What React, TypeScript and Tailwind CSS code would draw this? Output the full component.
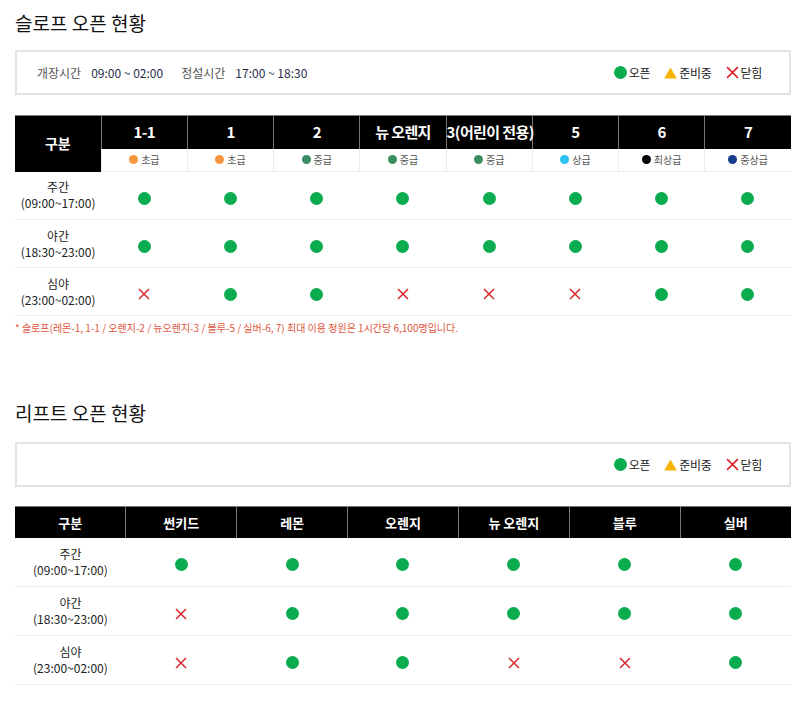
const font = { fontFamily: '"Noto Sans CJK KR", "Noto Sans", sans-serif' };

type S = 'o' | 'x';

const slopes = [
  { name: '1-1', level: '초급', color: 'bg-[#f7963c]' },
  { name: '1', level: '초급', color: 'bg-[#f7963c]' },
  { name: '2', level: '중급', color: 'bg-[#3b8d62]' },
  { name: '뉴 오렌지', level: '중급', color: 'bg-[#3b8d62]' },
  { name: '3(어린이 전용)', level: '중급', color: 'bg-[#3b8d62]' },
  { name: '5', level: '상급', color: 'bg-[#2cc3f2]' },
  { name: '6', level: '최상급', color: 'bg-black' },
  { name: '7', level: '중상급', color: 'bg-[#153d8a]' },
];

const slopeRows: { label: string; time: string; s: S[] }[] = [
  { label: '주간', time: '(09:00~17:00)', s: ['o', 'o', 'o', 'o', 'o', 'o', 'o', 'o'] },
  { label: '야간', time: '(18:30~23:00)', s: ['o', 'o', 'o', 'o', 'o', 'o', 'o', 'o'] },
  { label: '심야', time: '(23:00~02:00)', s: ['x', 'o', 'o', 'x', 'x', 'x', 'o', 'o'] },
];

const lifts = ['썬키드', '레몬', '오렌지', '뉴 오렌지', '블루', '실버'];

const liftRows: { label: string; time: string; s: S[] }[] = [
  { label: '주간', time: '(09:00~17:00)', s: ['o', 'o', 'o', 'o', 'o', 'o'] },
  { label: '야간', time: '(18:30~23:00)', s: ['x', 'o', 'o', 'o', 'o', 'o'] },
  { label: '심야', time: '(23:00~02:00)', s: ['x', 'o', 'o', 'x', 'x', 'o'] },
];

function Cross({ size = 12 }: { size?: number }) {
  return (
    <svg width={size} height={size} viewBox="0 0 12 12" className="inline-block">
      <path d="M1 1L11 11M11 1L1 11" stroke="#d8262d" strokeWidth="1.5" fill="none" />
    </svg>
  );
}

function Mark({ s }: { s: S }) {
  return s === 'o' ? (
    <span className="inline-block h-[13px] w-[13px] rounded-full bg-[#0bab4f] align-middle" />
  ) : (
    <span className="inline-flex align-middle">
      <Cross />
    </span>
  );
}

function Legend() {
  return (
    <div className="flex items-center gap-[14px] text-[12px] tracking-[-0.3px] text-[#222]">
      <div className="flex items-center gap-[2px]">
        <span className="inline-block h-[13px] w-[13px] rounded-full bg-[#0bab4f]" />
        <span>오픈</span>
      </div>
      <div className="flex items-center gap-[2px]">
        <svg width="13" height="12" viewBox="0 0 13 12">
          <path d="M6.5 0.5L12.8 11.5H0.2Z" fill="#f7b500" />
        </svg>
        <span>준비중</span>
      </div>
      <div className="flex items-center gap-[2px]">
        <Cross size={13} />
        <span>닫힘</span>
      </div>
    </div>
  );
}

function TimeCell({ label, time }: { label: string; time: string }) {
  return (
    <td className="h-[48px] border-b border-[#ececec] text-center text-[12px] leading-[16px] text-[#222]">
      <div>{label}</div>
      <div>{time}</div>
    </td>
  );
}

export default function App() {
  return (
    <div className="min-h-[720px] bg-white pl-[15px] pr-[9px] pt-[9px] text-[#222]" style={font}>
      {/* 슬로프 */}
      <h2 className="text-[19px] font-normal leading-[28px] text-[#111]">슬로프 오픈 현황</h2>
      <div className="mt-[13px] flex h-[45px] items-center justify-between border-2 border-[#e3e3e3] pl-[20px] pr-[27px]">
        <div className="flex items-center text-[12px]">
          <span className="text-[#555]">개장시간</span>
          <span className="ml-[10px] text-[#1f2d4a]">09:00 ~ 02:00</span>
          <span className="ml-[18px] text-[#555]">정설시간</span>
          <span className="ml-[10px] text-[#1f2d4a]">17:00 ~ 18:30</span>
        </div>
        <Legend />
      </div>

      <table className="mt-[20px] w-full table-fixed border-collapse">
        <thead>
          <tr className="bg-black text-white">
            <th
              rowSpan={2}
              className="h-[56px] border-t border-[#777] text-[14px] font-bold"
            >
              구분
            </th>
            {slopes.map((c) => (
              <th
                key={c.name}
                className="h-[33px] whitespace-nowrap border-l border-t border-[#777] text-[15px] font-bold tracking-[-0.6px]"
              >
                {c.name}
              </th>
            ))}
          </tr>
          <tr>
            {slopes.map((c, i) => (
              <td
                key={i}
                className="h-[23px] border-b border-l border-[#ececec] text-center text-[10px] text-[#555]"
              >
                <span className="inline-flex items-center gap-[3px]">
                  <span className={`inline-block h-[9px] w-[9px] rounded-full ${c.color}`} />
                  {c.level}
                </span>
              </td>
            ))}
          </tr>
        </thead>
        <tbody>
          {slopeRows.map((r) => (
            <tr key={r.label}>
              <TimeCell label={r.label} time={r.time} />
              {r.s.map((s, i) => (
                <td key={i} className="border-b border-[#ececec] text-center">
                  <Mark s={s} />
                </td>
              ))}
            </tr>
          ))}
        </tbody>
      </table>
      <p className="mt-[4px] text-[10px] text-[#e0553c]">
        * 슬로프(레몬-1, 1-1 / 오렌지-2 / 뉴오렌지-3 / 블루-5 / 실버-6, 7) 최대 이용 정원은 1시간당 6,100명입니다.
      </p>

      {/* 리프트 */}
      <h2 className="mt-[64px] text-[19px] font-normal leading-[28px] text-[#111]">리프트 오픈 현황</h2>
      <div className="mt-[15px] flex h-[45px] items-center justify-end border-2 border-[#e3e3e3] pr-[27px]">
        <Legend />
      </div>

      <table className="mt-[19px] w-full table-fixed border-collapse">
        <thead>
          <tr className="bg-black text-white">
            <th className="h-[31px] border-t border-[#777] text-[13px] font-bold">구분</th>
            {lifts.map((l) => (
              <th key={l} className="border-l border-t border-[#777] text-[13px] font-bold">
                {l}
              </th>
            ))}
          </tr>
        </thead>
        <tbody>
          {liftRows.map((r) => (
            <tr key={r.label}>
              <TimeCell label={r.label} time={r.time} />
              {r.s.map((s, i) => (
                <td key={i} className="h-[49px] border-b border-[#ececec] text-center">
                  <Mark s={s} />
                </td>
              ))}
            </tr>
          ))}
        </tbody>
      </table>
    </div>
  );
}
